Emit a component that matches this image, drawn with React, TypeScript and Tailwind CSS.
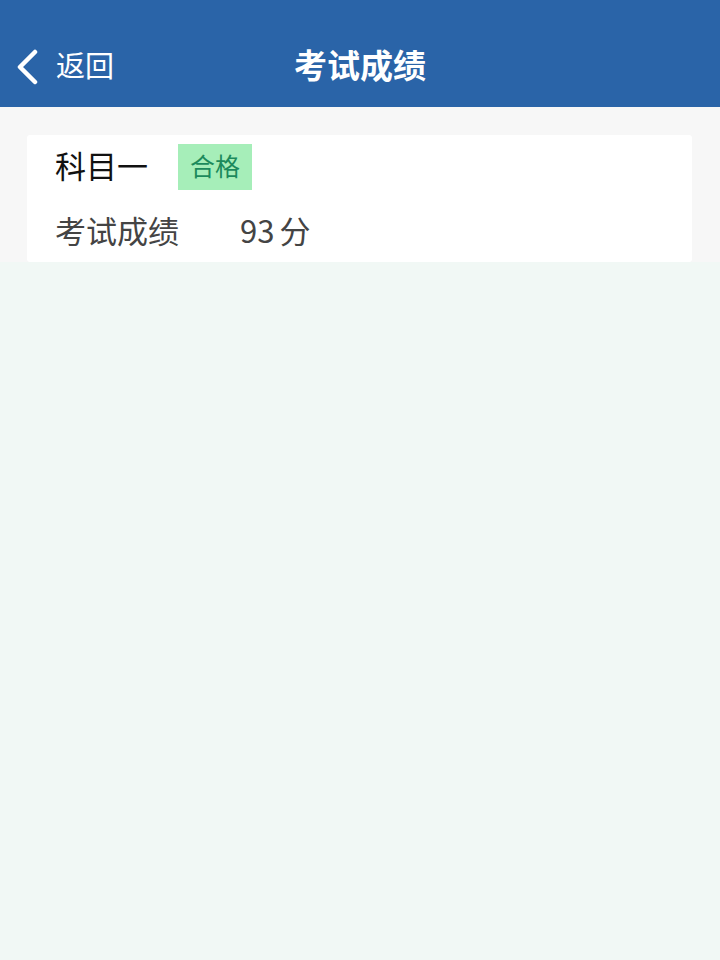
import React from "react";

export default function App() {
  const font = { fontFamily: '"Noto Sans CJK SC", "Noto Sans", sans-serif' };
  return (
    <div
      className="w-[720px] h-[960px] bg-[#f1f8f5] flex flex-col"
      style={font}
    >
      <div className="h-[107px] bg-[#2a64a8] pt-[26px] relative">
        <div className="h-[81px] flex items-center relative">
          <div className="flex items-center pl-[15px]">
            <svg width="24" height="36" viewBox="0 0 24 36" fill="none">
              <path
                d="M20 3 L5 18 L20 33"
                stroke="white"
                strokeWidth="4.5"
                strokeLinecap="round"
                strokeLinejoin="round"
              />
            </svg>
            <span className="ml-[17px] mb-[4px] text-[29px] text-white leading-none">返回</span>
          </div>
          <div className="absolute inset-0 flex items-center justify-center pointer-events-none">
            <span className="mb-[5px] text-[33px] font-bold text-white leading-none">考试成绩</span>
          </div>
        </div>
      </div>
      <div className="bg-[#f7f7f7] pt-[28px] pl-[27px] pr-[28px]">
        <div className="bg-white rounded-[3px] h-[127px] pl-[28px] flex flex-col">
          <div className="h-[64px] flex items-center">
            <span className="mb-[6px] text-[31px] text-[#111111] leading-none">科目一</span>
            <span className="ml-[30px] h-[46px] w-[74px] bg-[#a6eeb9] flex items-center justify-center text-[25px] text-[#1c8a5c] leading-none">
              <span className="mb-[3px]">合格</span>
            </span>
          </div>
          <div className="h-[63px] pt-[3px] flex items-center">
            <span className="mb-[6px] text-[31px] text-[#444444] leading-none w-[185px]">考试成绩</span>
            <span className="mb-[6px] text-[31px] text-[#444444] leading-none">
              93<span className="ml-[5px]">分</span>
            </span>
          </div>
        </div>
      </div>
    </div>
  );
}
